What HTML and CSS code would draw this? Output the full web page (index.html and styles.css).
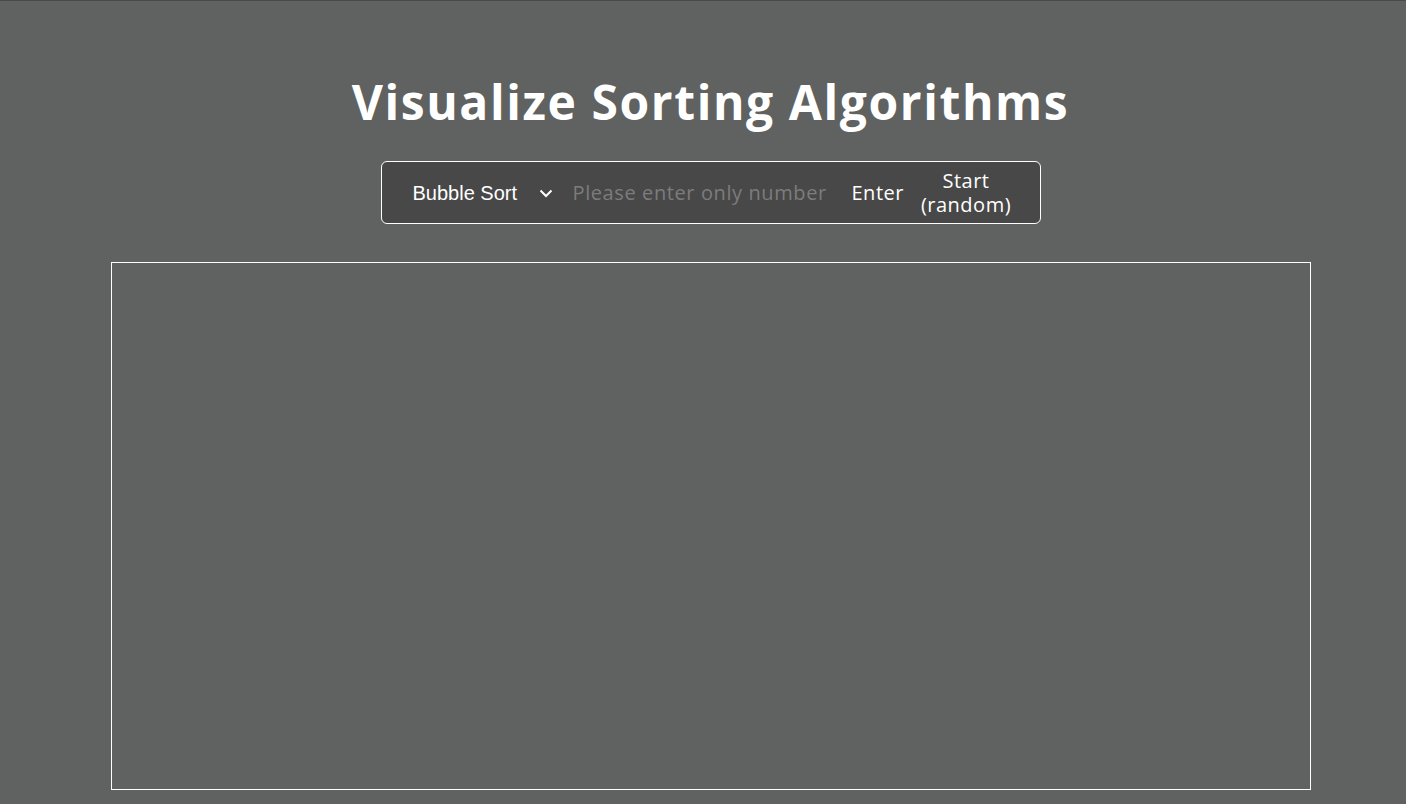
FILE: index.html
```html
<!DOCTYPE html>
<html lang="en">
<head>
<meta charset="utf-8">
<title>Visualize Sorting Algorithms</title>
<link rel="stylesheet" href="styles.css">
</head>
<body>
<main class="page">
  <h1 class="title">Visualize Sorting Algorithms</h1>
  <div class="controls">
    <div class="select-wrap">
      <select class="algo">
        <option>Bubble Sort</option>
        <option>Selection Sort</option>
        <option>Insertion Sort</option>
      </select>
      <svg class="chevron" width="14" height="9" viewBox="0 0 14 9"><path d="M1.5 1.5 L7 7 L12.5 1.5" fill="none" stroke="#fff" stroke-width="2"/></svg>
    </div>
    <input class="numbers" type="text" placeholder="Please enter only number">
    <button class="btn">Enter</button>
    <button class="btn">Start<br>(random)</button>
  </div>
  <div class="canvas"></div>
</main>
</body>
</html>
```

FILE: styles.css
```css
html, body {
  margin: 0;
  padding: 0;
  background: #606261;
}
body {
  border-top: 1px solid #4a4a4a;
  font-family: "Montserrat", "Open Sans", "Noto Sans", sans-serif;
}
.page {
  padding-left: 15px;
  display: flex;
  flex-direction: column;
  align-items: center;
}
.title {
  margin: 71px 0 0;
  font-size: 48px;
  line-height: 60px;
  font-weight: 700;
  color: #fff;
  font-family: "Open Sans", sans-serif;
  letter-spacing: 1.6px;
}
.controls {
  margin-top: 29px;
  box-sizing: border-box;
  width: 660px;
  height: 63px;
  display: flex;
  align-items: center;
  padding: 0 24px 0 31px;
  background: #484848;
  border: 1px solid #fff;
  border-radius: 6px;
}
.select-wrap {
  display: flex;
  align-items: center;
}
.algo {
  appearance: none;
  -webkit-appearance: none;
  background: transparent;
  border: none;
  color: #fff;
  font-family: "Liberation Sans", Arial, sans-serif;
  font-size: 20px;
  padding: 0;
  margin: 0;
  width: 126px;
  outline: none;
}
.algo option {
  color: #000;
}
.chevron {
  margin-top: 1px;
}
.numbers {
  margin-left: 20px;
  width: 262px;
  background: transparent;
  border: none;
  outline: none;
  padding: 0;
  color: #fff;
  font-family: "Open Sans", sans-serif;
  font-size: 20px;
  letter-spacing: 0.6px;
}
.numbers::placeholder {
  color: #7c7c7c;
}
.btn {
  background: transparent;
  border: none;
  color: #fff;
  font-family: "Open Sans", sans-serif;
  font-size: 20px;
  line-height: 24px;
  letter-spacing: 0.5px;
  padding: 0;
  margin-left: 17px;
  text-align: center;
}
.canvas {
  margin-top: 38px;
  width: 1200px;
  height: 528px;
  box-sizing: border-box;
  border: 1px solid #fff;
}
```
